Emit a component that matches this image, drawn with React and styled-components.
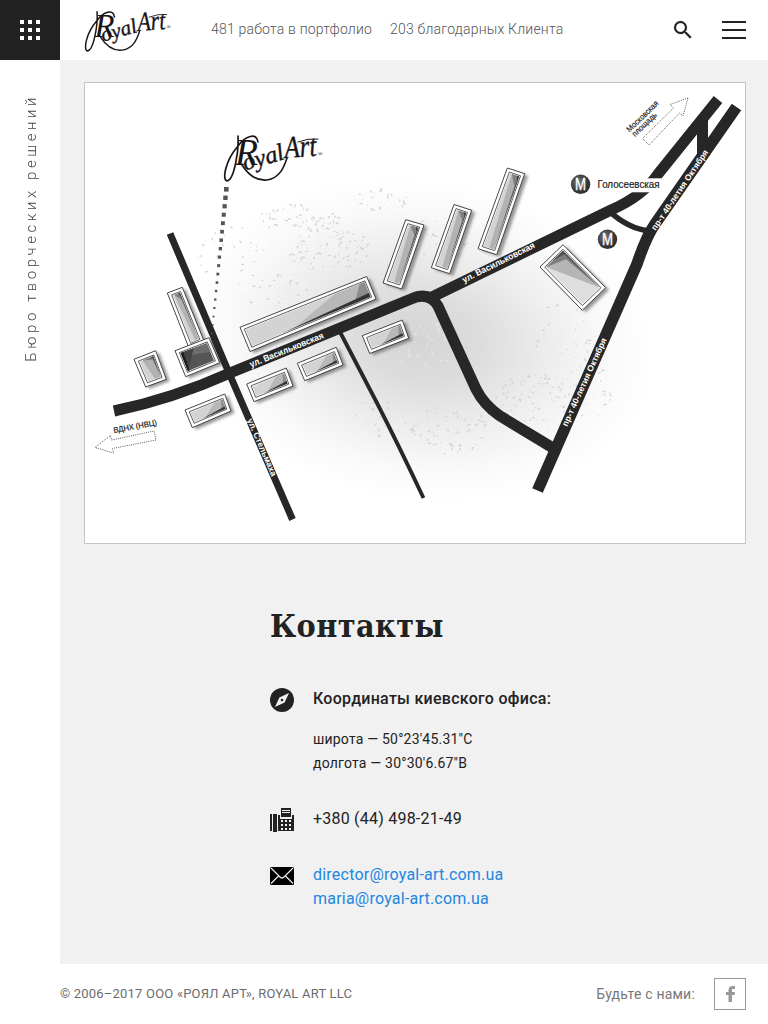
import React from 'react';
import styled, { createGlobalStyle } from 'styled-components';

const GlobalStyle = createGlobalStyle`
  *, *::before, *::after { box-sizing: border-box; }
  body { margin: 0; background: #fff; color: #222; font-family: Roboto, sans-serif; }
  h1, h2, p { margin: 0; }
  a { color: inherit; text-decoration: none; }
  button { padding: 0; border: 0; background: none; color: inherit; display: flex; cursor: pointer; }
  svg { display: block; }
`;

const Page = styled.div`
  display: grid;
  grid-template: 60px 904px 60px / 60px 708px;
  width: 768px;
  height: 1024px;
  overflow: hidden;
`;
const GridButton = styled.button`
  && { background: #222; }
  align-items: center;
  justify-content: center;
`;
const Header = styled.header`
  display: flex;
  align-items: center;
  padding: 0 22px 0 24px;
`;
const Logo = styled.a`
  padding-top: 2px;
`;
const Stats = styled.div`
  display: flex;
  flex: 1;
  gap: 18px;
  margin-left: 40px;
  padding-bottom: 2px;
  font-size: 14px;
  font-weight: 300;
  color: #555;
  white-space: nowrap;
`;
const Stat = styled.a`
  letter-spacing: ${(p) => p.$spacing}px;
`;
const Actions = styled.div`
  display: flex;
  align-items: center;
  gap: 27px;
`;
const Rail = styled.aside`
  grid-row: 2 / 4;
  display: flex;
  justify-content: center;
  align-items: flex-start;
  padding: 34px 0 0 2px;
`;
const Slogan = styled.p`
  writing-mode: vertical-rl;
  transform: rotate(180deg);
  font-size: 15px;
  line-height: 20px;
  font-weight: 300;
  letter-spacing: 3.550px;
  color: #444;
  white-space: nowrap;
`;
const Main = styled.main`
  background: #f1f1f1;
  padding: 22px 22px 0 24px;
`;
const MapFrame = styled.section`
  height: 462px;
  border: 1px solid #c4c4c4;
  background: #fff;
`;
const Contacts = styled.section`
  padding: 60px 0 0 186px;
`;
const Title = styled.h1`
  font: bold 32px/44px 'Roboto Slab', 'DejaVu Serif Condensed', 'DejaVu Serif', serif;
  font-stretch: condensed;
  letter-spacing: 0.4px;
  margin-bottom: 39px;
`;
const Contact = styled.div`
  display: flex;
  gap: 19px;
  margin-bottom: ${(p) => p.$after || 0}px;
`;
const IconBox = styled.span`
  flex: none;
  width: 24px;
  padding-top: ${(p) => p.$top || 0}px;
`;
const Lines = styled.div`
  font-size: 16px;
  line-height: 24px;
  letter-spacing: ${(p) => p.$spacing || 0}px;
`;
const Subtitle = styled.h2`
  font-size: 16px;
  line-height: 24px;
  font-weight: 500;
  letter-spacing: 0.27px;
  margin-bottom: 16px;
`;
const Coordinate = styled.p`
  font-size: 14px;
  line-height: 24px;
  letter-spacing: 0.2px;
`;
const MailLink = styled.a`
  && { color: #2186e0; }
  display: block;
`;
const Footer = styled.footer`
  display: flex;
  align-items: center;
  justify-content: space-between;
  padding-right: 22px;
  color: #6c6c6c;
  font-size: 13px;
`;
const Copyright = styled.p`
  letter-spacing: 0.2px;
  padding-bottom: 2px;
`;
const Social = styled.div`
  display: flex;
  align-items: center;
  gap: 19px;
  font-size: 14px;
  letter-spacing: 0.2px;
  color: #777;
`;
const SocialButton = styled.a`
  display: flex;
  align-items: center;
  justify-content: center;
  width: 32px;
  height: 32px;
  border: 1px solid #999;
`;

function Wordmark(props) {
  return (
    <svg viewBox="0 0 100 48" overflow="visible" aria-label="RoyalArt" {...props}>
      <g fill="#191516" fontFamily="'Liberation Serif', serif" fontStyle="italic">
        <text x="12" y="31" fontSize="38" textLength="23" lengthAdjust="spacingAndGlyphs">R</text>
        <text x="22" y="36.500" fontSize="24" textLength="42" lengthAdjust="spacingAndGlyphs" transform="rotate(-16 22 36.500)" stroke="#191516" strokeWidth=".4">oyal</text>
        <text x="62" y="24" fontSize="31" textLength="32" lengthAdjust="spacingAndGlyphs" transform="rotate(-4 62 24)" stroke="#191516" strokeWidth=".4">Art</text>
        <text x="94.500" y="22" fontSize="7" fontStyle="normal">®</text>
      </g>
      <g fill="none" stroke="#191516" strokeLinecap="round">
        <path d="M15 2C16 18 11 46 4 47C-1 46 2 27 15 12C22 2 34 -2 35 8" strokeWidth="1.700" />
        <path d="M19 31C26 42 34 47 44 46C57 44 61 33 64 24" strokeWidth="1.600" />
        <path d="M75 8Q85 4 95 5" strokeWidth="1" />
      </g>
    </svg>
  );
}

const lerp = (a, b, t) => [a[0] + (b[0] - a[0]) * t, a[1] + (b[1] - a[1]) * t];
const points = (list) => list.map((p) => p.map((n) => n.toFixed(1)).join(',')).join(' ');
const inset = (quad, d) =>
  quad.map((p, i) => {
    const next = quad[(i + 1) % 4];
    const prev = quad[(i + 3) % 4];
    const ln = Math.hypot(next[0] - p[0], next[1] - p[1]);
    const lp = Math.hypot(prev[0] - p[0], prev[1] - p[1]);
    return [0, 1].map((k) => p[k] + ((next[k] - p[k]) / ln) * d + ((prev[k] - p[k]) / lp) * d);
  });

const buildings = [
  { q: [[240, 327.3], [366.7, 276.5], [376, 299], [250, 351.500]], long: true },
  { q: [[167.3, 293], [182.3, 287.3], [204, 341], [189, 348]] },
  { q: [[134, 359.3], [155.7, 350.7], [166.3, 379.3], [145.7, 387]] },
  { q: [[175, 350.7], [209, 337.7], [219.7, 362.7], [185.7, 376.7]], dark: true },
  { q: [[185, 410], [224.7, 394], [231, 411], [192.3, 427.7]], long: true },
  { q: [[246.7, 384], [286.3, 368], [293, 386], [254, 401.7]], long: true },
  { q: [[297.3, 363.3], [336.3, 347.3], [343, 365], [304.7, 380.7]], long: true },
  { q: [[362.3, 335.7], [402.3, 320], [408.7, 338.3], [369.7, 353.5]], long: true },
  { q: [[405.7, 219.7], [424, 225], [401.7, 289], [383, 283]] },
  { q: [[454, 204.5], [471.7, 210.3], [449.7, 273.7], [431.3, 267.7]] },
  { q: [[507.3, 168], [524.7, 173.7], [496.7, 254.7], [478, 248.7]] },
  { q: [[540, 267], [563, 244.7], [605.7, 287.7], [582.3, 310.3]], wide: true },
];

function facets({ dark, wide, long }, [a, b, c, d]) {
  if (dark) {
    return [
      ['#555', [a, b, c, d]],
      ['#6d6d6d', [lerp(a, b, 0.5), b, lerp(b, c, 0.5), lerp(a, c, 0.3)]],
      ['#444', [a, lerp(a, b, 0.5), d]],
      ['#1c1c1c', [a, lerp(a, b, 0.1), lerp(d, c, 0.06), d]],
    ];
  }
  if (wide) {
    return [
      ['#dedede', [a, b, c, d]],
      ['#b5b5b5', [a, b, c]],
      ['#7d7d7d', [a, b, c, lerp(b, d, 0.16)]],
      ['#555', [lerp(a, b, 0.4), b, lerp(b, c, 0.9), lerp(b, d, 0.07)]],
    ];
  }
  if (long) {
    return [
      ['#d3d3d3', [a, b, c, d]],
      ['#b8b8b8', [lerp(a, b, 0.75), b, c, lerp(d, c, 0.35)]],
      ['#8c8c8c', [lerp(b, a, 0.04), b, c, lerp(d, c, 0.4), lerp(c, a, 0.12)]],
      ['#333', [lerp(b, c, 0.75), c, lerp(d, c, 0.25)]],
    ];
  }
  return [
    ['#d3d3d3', [a, b, c, d]],
    ['#b2b2b2', [lerp(a, b, 0.2), b, c, lerp(d, c, 0.55)]],
    ['#808080', [lerp(a, b, 0.2), b, c, lerp(b, d, 0.14)]],
    ['#444', [b, lerp(b, c, 0.97), lerp(b, d, 0.07), lerp(b, a, 0.25)]],
  ];
}

function Building({ q, ...kind }) {
  return (
    <g>
      <polygon points={points(q)} fill="#555" opacity=".6" transform="translate(3.500 2)" filter="url(#soft)" />
      <polygon points={points(q)} fill="#fff" stroke="#333" strokeWidth=".9" />
      <polygon points={points(inset(q, 3.300))} fill="#fff" stroke="#333" strokeWidth=".8" />
      {facets(kind, inset(q, 4.300)).map(([fill, shape]) => (
        <polygon key={fill} points={points(shape)} fill={fill} />
      ))}
    </g>
  );
}

const clusters = [
  [300, 218, 42, 14, 75], [330, 250, 42, 22, 95], [380, 200, 28, 12, 30], [235, 255, 38, 28, 30],
  [275, 290, 45, 20, 35], [430, 345, 38, 25, 90], [450, 430, 40, 24, 80], [540, 400, 45, 28, 90],
  [590, 385, 25, 35, 40], [380, 420, 28, 24, 30], [560, 330, 35, 25, 30], [440, 240, 30, 25, 28],
];
const specks = (() => {
  let seed = 17;
  const rnd = () => ((seed = (seed * 16807) % 2147483647) / 2147483647);
  return clusters.flatMap(([x, y, rx, ry, n], k) =>
    Array.from({ length: n }, (_, i) => {
      const t = rnd() * Math.PI * 2;
      const r = Math.sqrt(rnd());
      return { id: `${k}-${i}`, x: x + Math.cos(t) * r * rx, y: y + Math.sin(t) * r * ry, w: 0.5 + rnd() * 1.300, a: rnd() * 180, light: k === 5 };
    })
  );
})();

const trail = Array.from({ length: 18 }, (_, i) => ({
  x: 226.3 - i * 0.850,
  y: 189.3 + i * 8.480,
  s: Math.max(1.700, 4.600 - i * 0.180),
}));

function Metro({ x, y }) {
  return (
    <g>
      <circle cx={x} cy={y} r="9.700" fill="url(#metro)" />
      <text x={x - 5.500} y={y + 5.500} textLength="11" lengthAdjust="spacingAndGlyphs" fontFamily="Liberation Sans, sans-serif" fontSize="16" fill="#fff" stroke="#fff" strokeWidth=".3">М</text>
    </g>
  );
}

function StreetName({ x, y, angle, length, size = 9, color = '#fff', weight = 'bold', children }) {
  return (
    <text x={x} y={y} transform={`rotate(${angle} ${x} ${y})`} textLength={length} lengthAdjust="spacingAndGlyphs"
      fontFamily="Liberation Sans, sans-serif" fontWeight={weight} fontSize={size} fill={color}
      stroke={color} strokeWidth={weight === 'normal' ? 0.2 : 0}>
      {children}
    </text>
  );
}

function OfficeMap() {
  return (
    <svg width="660" height="460" viewBox="85 83 660 460">
      <defs>
        <radialGradient id="haze">
          <stop offset="0" stopColor="#d4d4d4" />
          <stop offset=".25" stopColor="#dcdcdc" />
          <stop offset=".55" stopColor="#ededed" />
          <stop offset=".8" stopColor="#f9f9f9" />
          <stop offset="1" stopColor="#fff" />
        </radialGradient>
        <radialGradient id="metro" cx=".4" cy=".4">
          <stop offset="0" stopColor="#777" />
          <stop offset="1" stopColor="#333" />
        </radialGradient>
        <filter id="soft" x="-30%" y="-30%" width="160%" height="160%">
          <feGaussianBlur stdDeviation="1.600" />
        </filter>
      </defs>
      <ellipse cx="420" cy="340" rx="235" ry="160" fill="url(#haze)" transform="rotate(8 420 340)" />
      {specks.map((s) => (
        <ellipse key={s.id} cx={s.x} cy={s.y} rx={s.w} ry={s.w * 0.450} fill={s.light ? '#e6e6e6' : '#d2d2d2'} transform={`rotate(${s.a} ${s.x} ${s.y})`} />
      ))}
      {buildings.map((b, i) => <Building key={i} {...b} />)}
      <g fill="none" stroke="#272727">
        <path d="M340 332L377 403Q400 448 423.500 498" strokeWidth="3.800" />
        <path d="M170 233.500L229 373L292.500 519.500" strokeWidth="7" />
        <path d="M114 411Q172 399 230 373L411 299Q429 291 438 306L476 389Q484 405 500 416L553 448" strokeWidth="11" />
        <path d="M430 298L611 210Q643 196 658 174L718 99.500" strokeWidth="11" />
        <path d="M736.500 107L655 224Q646 237 637 264L537.500 490.500" strokeWidth="11.500" />
        <path d="M702.500 120V155" strokeWidth="11" />
        <path d="M608 210Q628 229 650 231" strokeWidth="5.500" />
      </g>
      <rect x="595" y="178.300" width="70" height="14" fill="#fff" />
      {trail.map((t, i) => (
        <rect key={i} x={t.x - t.s / 2} y={t.y - t.s / 2} width={t.s} height={t.s} fill="#555" />
      ))}
      <g transform="translate(223 134)"><Wordmark width="100" height="48" /></g>
      <Metro x={580.600} y={184.300} />
      <Metro x={607.500} y={239.300} />
      <StreetName x={597.500} y={188} angle={0} length={62} size={10} color="#222" weight="normal">Голосеевская</StreetName>
      <StreetName x={251} y={367.500} angle={-22} length={79}>ул. Васильковская</StreetName>
      <StreetName x={464} y={283} angle={-26.500} length={80}>ул. Васильковская</StreetName>
      <StreetName x={247} y={420} angle={66.500} length={62} size={8.500}>ул. Стельмаха</StreetName>
      <StreetName x={655.500} y={231} angle={-56} length={95} size={8.500}>пр-т 40-летия Октября</StreetName>
      <StreetName x={567} y={427} angle={-65.500} length={96} size={8.500}>пр-т 40-летия Октября</StreetName>
      <StreetName x={114} y={433} angle={-10.500} length={44} size={8} color="#222" weight="normal">ВДНХ (НВЦ)</StreetName>
      <StreetName x={629.500} y={132.500} angle={-44} length={41} size={8} color="#222" weight="normal">Московская</StreetName>
      <StreetName x={635} y={137} angle={-44} length={31} size={8} color="#222" weight="normal">площадь</StreetName>
      <g fill="#fff" stroke="#555" strokeWidth="1" strokeDasharray="1 1.200">
        <path d="M95 447.500L110.500 435.500L111.500 440L154 431L156 440L112.500 448.500L113.500 453Z" />
        <path d="M688 98L670 104.500L673.500 108L642.500 138.500L649 145L679.500 113L683 116Z" />
      </g>
    </svg>
  );
}

const cells = [0, 1, 2];

export default function App() {
  return (
    <>
      <GlobalStyle />
      <Page>
        <GridButton aria-label="Меню">
          <svg width="20" height="20" fill="#fff">
            {cells.map((r) => cells.map((c) => <rect key={`${r}${c}`} x={c * 8} y={r * 8} width="4" height="4" />))}
          </svg>
        </GridButton>
        <Header>
          <Logo href="#home"><Wordmark width="87" height="42" /></Logo>
          <Stats>
            <Stat href="#portfolio" $spacing={0.2}>481 работа в портфолио</Stat>
            <Stat href="#clients" $spacing={0.2}>203 благодарных Клиента</Stat>
          </Stats>
          <Actions>
            <button aria-label="Поиск">
              <svg width="24" height="24" viewBox="0 0 24 24" fill="#222" stroke="#222" strokeWidth=".2">
                <path d="M15.500 14h-.79l-.28-.27A6.470 6.470 0 0 0 16 9.500 6.500 6.500 0 1 0 9.500 16c1.610 0 3.090-.59 4.230-1.570l.27.28v.79l5 4.990L20.490 19l-4.990-5zm-6 0C7.010 14 5 11.990 5 9.500S7.010 5 9.500 5 14 7.010 14 9.500 11.990 14 9.500 14z" />
              </svg>
            </button>
            <button aria-label="Навигация">
              <svg width="24" height="18" fill="#222">
                <rect width="24" height="2" />
                <rect y="8" width="24" height="2" />
                <rect y="16" width="24" height="2" />
              </svg>
            </button>
          </Actions>
        </Header>
        <Rail><Slogan>Бюро творческих решений</Slogan></Rail>
        <Main>
          <MapFrame><OfficeMap /></MapFrame>
          <Contacts>
            <Title>Контакты</Title>
            <Contact $after={32}>
              <IconBox $top={1}>
                <svg width="24" height="24">
                  <circle cx="12" cy="12" r="12" fill="#222" />
                  <path d="M19 5L14.600 14.600L5 19L9.400 9.400Z" fill="#f1f1f1" />
                  <circle cx="12" cy="12" r="1.300" fill="#222" />
                </svg>
              </IconBox>
              <div>
                <Subtitle>Координаты киевского офиса:</Subtitle>
                <Coordinate>широта — 50°23'45.31"С</Coordinate>
                <Coordinate>долгота — 30°30'6.67"В</Coordinate>
              </div>
            </Contact>
            <Contact $after={31}>
              <IconBox $top={1}>
                <svg width="24" height="24" fill="#222" shapeRendering="crispEdges">
                  <rect y="6" width="2" height="17" />
                  <rect x="3" y="6" width="4" height="18" />
                  <path d="M8 7H10V11H22V7H24V23H8Z" />
                  <path d="M11 0H21V9H11Z" />
                  <path d="M12 2H20V3H12ZM12 4H20V5H12ZM11 12H13V14H11ZM15 12H17V14H15ZM19 12H21V14H19ZM11 16H13V18H11ZM15 16H17V18H15ZM19 16H21V18H19ZM11 20H13V22H11ZM15 20H17V22H15ZM19 20H21V22H19Z" fill="#f1f1f1" />
                </svg>
              </IconBox>
              <Lines $spacing={0.22}>+380 (44) 498-21-49</Lines>
            </Contact>
            <Contact>
              <IconBox $top={4}>
                <svg width="24" height="18">
                  <rect width="24" height="18" rx="1.500" fill="#000" />
                  <path d="M1 1L10 10Q12 12 14 10L23 1M1 16.500L8.500 9M23 16.500L15.500 9" fill="none" stroke="#f1f1f1" strokeWidth="1.100" />
                </svg>
              </IconBox>
              <Lines $spacing={0.22}>
                <MailLink href="mailto:director@royal-art.com.ua">director@royal-art.com.ua</MailLink>
                <MailLink href="mailto:maria@royal-art.com.ua">maria@royal-art.com.ua</MailLink>
              </Lines>
            </Contact>
          </Contacts>
        </Main>
        <Footer>
          <Copyright>© 2006–2017 ООО «РОЯЛ АРТ», ROYAL ART LLC</Copyright>
          <Social>
            <span>Будьте с нами:</span>
            <SocialButton href="#facebook" aria-label="Facebook">
              <svg width="9" height="16" fill="#999">
                <path d="M2.500 16V9H0V6H2.500V4.200C2.500 1.500 4 0 6.400 0H9V3H7.200C6.200 3 6 3.500 6 4.300V6H9L8.600 9H6V16Z" />
              </svg>
            </SocialButton>
          </Social>
        </Footer>
      </Page>
    </>
  );
}
